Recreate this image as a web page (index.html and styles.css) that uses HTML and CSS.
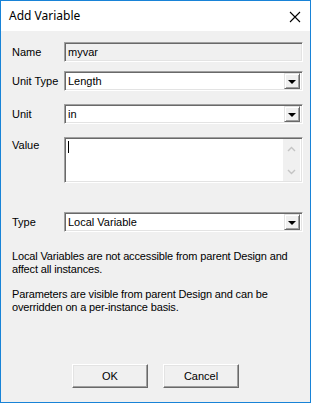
FILE: index.html
```html
<html>
<head>
	<title>Add Variable</title>
	<link rel="stylesheet" href="styles.css">
</head>
<body>
	<div id="window">
		<div id="titlebar">
			<div id="title">Add Variable</div>
			<svg class="close" width="12" height="12" viewBox="0 0 12 12"><path d="M1 1L11 11M11 1L1 11" stroke="#000" stroke-width="1.1"/></svg>
		</div>
		<div id="body">
			<div class="row">
				<div class="label">Name</div>
				<div class="field disabled">myvar</div>
			</div>
			<div class="row gap9">
				<div class="label">Unit Type</div>
				<div class="field combo"><span>Length</span><div class="drop"><div class="arrow"></div></div></div>
			</div>
			<div class="row gap13">
				<div class="label">Unit</div>
				<div class="field combo"><span>in</span><div class="drop"><div class="arrow"></div></div></div>
			</div>
			<div class="row gap13 top">
				<div class="label">Value</div>
				<div class="field memo">
					<div class="caret"></div>
					<div class="scroll">
						<svg width="9" height="6" viewBox="0 0 9 6"><path d="M1 5L4.5 1.5L8 5" fill="none" stroke="#c4c4c4" stroke-width="1.4"/></svg>
						<svg width="9" height="6" viewBox="0 0 9 6"><path d="M1 1L4.5 4.5L8 1" fill="none" stroke="#c4c4c4" stroke-width="1.4"/></svg>
					</div>
				</div>
			</div>
			<div class="row gap29">
				<div class="label">Type</div>
				<div class="field combo"><span>Local Variable</span><div class="drop"><div class="arrow"></div></div></div>
			</div>
			<p class="note first">Local Variables are not accessible from parent Design and affect all instances.</p>
			<p class="note">Parameters are visible from parent Design and can be overridden on a per-instance basis.</p>
			<div class="buttons">
				<button>OK</button>
				<button>Cancel</button>
			</div>
		</div>
	</div>
</body>
</html>
```

FILE: styles.css
```css
*
{
	box-sizing: border-box;
}
body
{
	margin: 0px;
	padding: 0px;
	background: #f0f0f0;
	font-family: "Liberation Sans", Arial, sans-serif;
	font-size: 11px;
	color: #000;
}
#window
{
	width: 311px;
	height: 403px;
	border: 1px solid #1883d7;
	display: flex;
	flex-direction: column;
}
#titlebar
{
	height: 30px;
	background: #fff;
	display: flex;
	align-items: center;
	padding: 0px 9px 0px 8px;
}
#title
{
	flex: 1;
	font-family: "Noto Sans", sans-serif;
	font-size: 12px;
	padding-bottom: 1px;
}
.close
{
	margin-top: 1px;
}
#body
{
	flex: 1;
	display: flex;
	flex-direction: column;
	padding: 11px 7px 14px 11px;
	background: #f0f0f0;
}
.row
{
	display: flex;
	align-items: center;
}
.row.top
{
	align-items: flex-start;
}
.row.top .label
{
	padding-top: 2px;
}
.gap9
{
	margin-top: 9px;
}
.gap13
{
	margin-top: 13px;
}
.gap29
{
	margin-top: 29px;
}
.label
{
	width: 52px;
	flex: none;
}
.field
{
	flex: 1;
	height: 20px;
	background: #fff;
	border: 1px solid;
	border-color: #a0a0a0 #fff #fff #a0a0a0;
	box-shadow: inset 1px 1px #696969, inset -1px -1px #e3e3e3;
	display: flex;
	align-items: center;
	padding: 0px 2px 0px 3px;
}
.field.disabled
{
	background: #f0f0f0;
}
.combo span
{
	flex: 1;
}
.drop
{
	width: 16px;
	height: 16px;
	background: #f0f0f0;
	border: 1px solid;
	border-color: #e3e3e3 #696969 #696969 #e3e3e3;
	box-shadow: inset 1px 1px #fff, inset -1px -1px #a0a0a0;
	display: flex;
	align-items: center;
	justify-content: center;
}
.arrow
{
	width: 0px;
	height: 0px;
	border-left: 4px solid transparent;
	border-right: 4px solid transparent;
	border-top: 4px solid #000;
	margin-top: 1px;
}
.memo
{
	height: 46px;
	align-items: stretch;
	padding: 2px 2px 2px 3px;
}
.caret
{
	flex: 1;
	border-left: 1px solid #000;
	margin: 1px 0px 0px 0px;
	height: 12px;
}
.scroll
{
	width: 17px;
	background: #f0f0f0;
	display: flex;
	flex-direction: column;
	justify-content: space-between;
	align-items: center;
	padding: 7px 0px 6px 0px;
	margin: -1px 0px -1px 0px;
}
.note
{
	margin: 12px 0px 0px 0px;
	line-height: 13px;
	letter-spacing: -0.15px;
}
.note.first
{
	margin-top: 18px;
}
.buttons
{
	margin-top: auto;
	display: flex;
	justify-content: center;
	gap: 15px;
	padding-right: 4px;
}
button
{
	width: 76px;
	height: 24px;
	font-family: "Liberation Sans", Arial, sans-serif;
	font-size: 11px;
	color: #000;
	background: #f0f0f0;
	border: 1px solid;
	border-color: #fff #696969 #696969 #fff;
	box-shadow: inset -1px -1px #a0a0a0, inset 1px 1px #e3e3e3;
	padding: 0px;
}
```
